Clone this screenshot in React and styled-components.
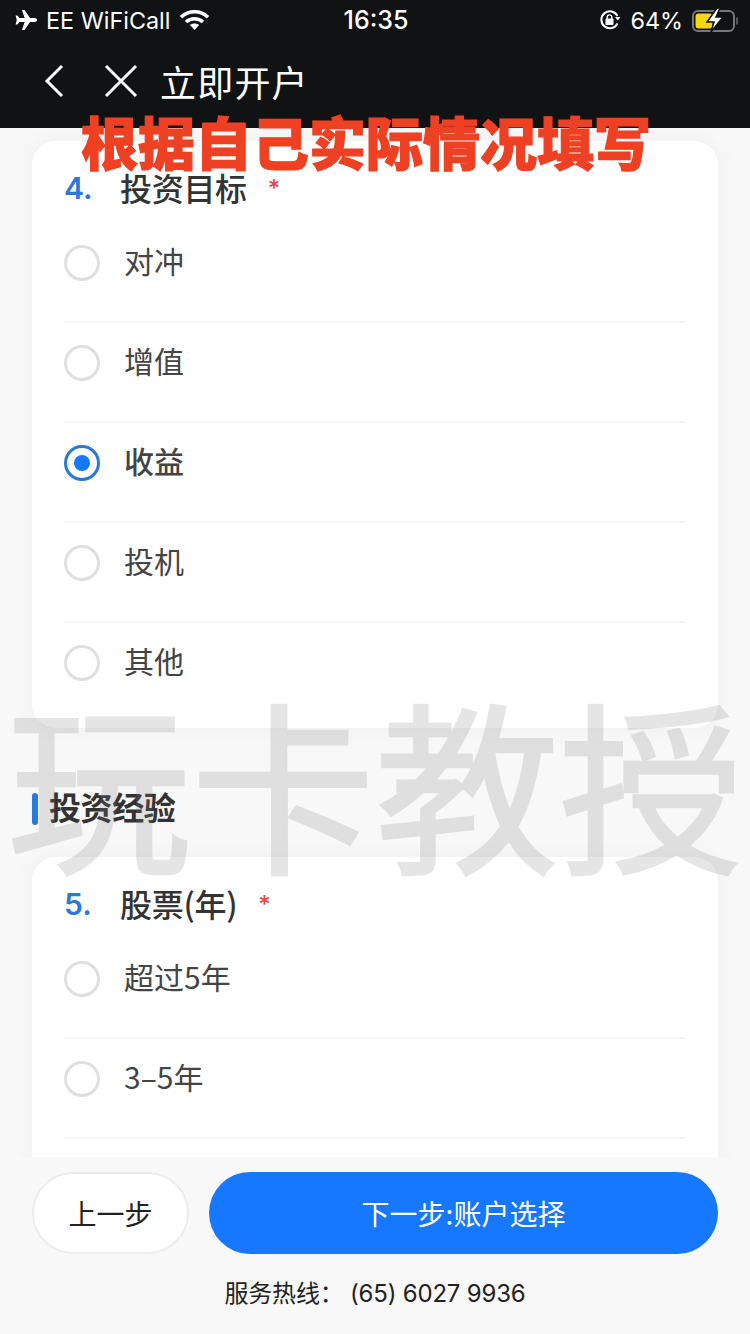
import React from 'react';
import styled, { createGlobalStyle } from 'styled-components';

const CJK = '"Noto Sans CJK SC", "Noto Sans", sans-serif';
const LATIN = 'Inter, "Noto Sans CJK SC", sans-serif';

const GlobalStyle = createGlobalStyle`
  html, body {
    margin: 0;
    padding: 0;
    background: #f8f8f8;
  }
  * {
    box-sizing: border-box;
  }
`;

const Page = styled.div`
  position: relative;
  display: flex;
  flex-direction: column;
  width: 750px;
  height: 1334px;
  overflow: hidden;
  background: #f8f8f8;
  font-family: ${CJK};
`;

const Header = styled.header`
  flex: 0 0 128px;
  display: flex;
  flex-direction: column;
  background: #111214;
  color: #fff;
`;

const StatusBar = styled.div`
  display: grid;
  grid-template-columns: 1fr auto 1fr;
  align-items: center;
  height: 40px;
  padding: 0 12px 0 14px;
  font-family: ${LATIN};
  font-size: 23.4px;
`;

const StatusGroup = styled.div`
  display: flex;
  align-items: center;
  gap: ${(p) => p.$gap}px;
  justify-content: ${(p) => (p.$end ? 'flex-end' : 'flex-start')};
`;

const Clock = styled.span`
  font-size: 25px;
  font-weight: 500;
`;

const NavBar = styled.div`
  display: flex;
  align-items: center;
  height: 88px;
  padding: 0 0 6px 44px;
`;

const NavButton = styled.span`
  display: flex;
  margin-right: ${(p) => p.$gap}px;
`;

const NavTitle = styled.h1`
  margin: 0;
  font-size: 36px;
  font-weight: 400;
  line-height: 1;
  letter-spacing: 1.2px;
`;

const Content = styled.main`
  flex: 1;
  min-height: 0;
  overflow: hidden;
  padding: 13px 32px 0;
`;

const Card = styled.section`
  border-radius: 24px;
  background: #fff;
  box-shadow: 0 0 20px 4px rgba(0, 0, 0, 0.03);
  padding: 29px 32px ${(p) => p.$bottom}px;
`;

const Question = styled.div`
  display: flex;
  align-items: center;
  height: 36px;
`;

const QuestionNo = styled.span`
  width: 56px;
  font-family: ${LATIN};
  font-size: 30px;
  font-weight: 600;
  color: #2a78dc;
`;

const QuestionText = styled.span`
  margin-top: -2px;
  font-size: 32px;
  font-weight: 500;
  line-height: 36px;
  letter-spacing: -0.3px;
  color: #333;
`;

const Required = styled.span`
  margin-left: 21px;
  font-family: ${LATIN};
  font-size: 24px;
  font-weight: 500;
  color: #e8484a;
`;

const OptionList = styled.div`
  margin-top: 17px;
`;

const Option = styled.div`
  display: flex;
  align-items: flex-start;
  gap: 24px;
  height: 100px;
  padding-top: 22px;
  border-bottom: ${(p) => (p.$last ? 'none' : '2px solid #f5f5f5')};
`;

const Radio = styled.span`
  flex: none;
  display: flex;
  align-items: center;
  justify-content: center;
  width: 36px;
  height: 36px;
  border-radius: 50%;
  border: 3px solid ${(p) => (p.$on ? '#2a78dc' : '#dfdfdf')};

  &::after {
    content: '';
    display: ${(p) => (p.$on ? 'block' : 'none')};
    width: 16px;
    height: 16px;
    border-radius: 50%;
    background: #1677ff;
  }
`;

const OptionLabel = styled.span`
  margin-top: -3px;
  font-size: 30px;
  font-weight: ${(p) => (p.$on ? 500 : 400)};
  line-height: 36px;
  color: #444;
`;

const SectionTitle = styled.h2`
  display: flex;
  align-items: center;
  gap: 11px;
  height: 129px;
  margin: 0;
  padding-top: 32px;
  font-size: 32px;
  font-weight: 700;
  letter-spacing: -0.4px;
  color: #333;

  &::before {
    content: '';
    width: 6px;
    height: 32px;
    border-radius: 3px;
    background: #2a78dc;
  }
`;

const SectionLabel = styled.span`
  margin-top: -5px;
  line-height: 36px;
`;

const Footer = styled.footer`
  flex: 0 0 177px;
  padding: 15px 32px 0;
  background: #f8f8f8;
`;

const ButtonRow = styled.div`
  display: flex;
  gap: 20px;
`;

const BackButton = styled.button`
  width: 157px;
  height: 82px;
  border: 2px solid #ececec;
  border-radius: 41px;
  background: #fff;
  color: #222;
  font-family: ${CJK};
  font-size: 28px;
`;

const NextButton = styled.button`
  flex: 1;
  height: 82px;
  border: none;
  border-radius: 41px;
  background: #1677ff;
  color: #fff;
  font-family: ${CJK};
  font-size: 28px;
`;

const Hotline = styled.div`
  margin-top: 23px;
  text-align: center;
  font-family: ${LATIN};
  font-size: 24px;
  line-height: 34px;
  letter-spacing: -0.2px;
  color: #222;
`;

const Banner = styled.div`
  position: absolute;
  top: 97px;
  left: 81px;
  font-size: 57px;
  font-weight: 900;
  line-height: 86px;
  white-space: nowrap;
  color: #ee4023;
  -webkit-text-stroke: 1.2px #ee4023;
`;

const Watermark = styled.div`
  position: absolute;
  top: 650px;
  left: 0;
  width: 750px;
  text-align: center;
  font-size: 184px;
  font-weight: 400;
  line-height: 260px;
  white-space: nowrap;
  color: #808080;
  -webkit-text-stroke: 2.5px #808080;
  opacity: 0.2;
  pointer-events: none;
`;

const Plane = () => (
  <svg width="23" height="22" viewBox="0 0 23 22" fill="#fff">
    <path d="M8 1h2.600l5.400 8h4.800c1.200 0 2.200.9 2.200 2s-1 2-2.200 2H16l-5.400 8H8l2.600-8H5.400l-2 2.600H1.600L2.800 11 1.600 6.400h1.800l2 2.600h5.200z" />
  </svg>
);

const Wifi = () => (
  <svg width="31" height="22" viewBox="0 0 31 22" fill="none" stroke="#fff" strokeWidth="3.6">
    <path d="M2 8.200C9.600 1 21.400 1 29 8.200" />
    <path d="M7 13c4.800-4.300 12.200-4.300 17 0" />
    <path d="M15.500 21l-4.600-5c2.600-2 6.600-2 9.200 0z" fill="#fff" stroke="none" />
  </svg>
);

const RotationLock = () => (
  <svg width="22" height="22" viewBox="0 0 22 22" fill="none">
    <path d="M18.500 14.500A8.500 8.500 0 1 1 18.500 7" stroke="#fff" strokeWidth="2" />
    <path d="M16 8h5.500l-2.700 3.500z" fill="#fff" />
    <rect x="6.500" y="9.500" width="8" height="6.500" rx="1" fill="#fff" />
    <path d="M8.200 10V8.200a2.300 2.300 0 0 1 4.600 0V10" stroke="#fff" strokeWidth="1.400" />
  </svg>
);

const Battery = () => (
  <svg width="46" height="26" viewBox="0 0 46 26" fill="none">
    <rect x="1" y="4" width="41" height="20" rx="5" stroke="#77787a" strokeWidth="2" />
    <rect x="3.500" y="6.500" width="17" height="15" rx="3" fill="#f5d60f" />
    <path d="M45 10.500v7" stroke="#55565a" strokeWidth="2" />
    <path d="M25 1L15 15h7l-3 10 12-15h-7l4-9z" fill="#fff" stroke="#111214" strokeWidth="1.500" />
  </svg>
);

const BackIcon = () => (
  <svg width="20" height="34" viewBox="0 0 20 34" fill="none" stroke="#fff" strokeWidth="3">
    <path d="M18 2L3 17l15 15" />
  </svg>
);

const CloseIcon = () => (
  <svg width="34" height="34" viewBox="0 0 34 34" fill="none" stroke="#fff" strokeWidth="3">
    <path d="M2 2l30 30M32 2L2 32" />
  </svg>
);

const goalOptions = [
  { label: '对冲' },
  { label: '增值' },
  { label: '收益', on: true },
  { label: '投机' },
  { label: '其他', last: true }
];

const stockOptions = [{ label: '超过5年' }, { label: '3–5年' }];

function Options({ items }) {
  return (
    <OptionList>
      {items.map((o) => (
        <Option key={o.label} $last={o.last}>
          <Radio $on={o.on} />
          <OptionLabel $on={o.on}>{o.label}</OptionLabel>
        </Option>
      ))}
    </OptionList>
  );
}

export default function App() {
  return (
    <Page>
      <GlobalStyle />
      <Header>
        <StatusBar>
          <StatusGroup $gap={9}>
            <Plane />
            <span>EE WiFiCall</span>
            <Wifi />
          </StatusGroup>
          <Clock>16:35</Clock>
          <StatusGroup $end $gap={9}>
            <RotationLock />
            <span>64%</span>
            <Battery />
          </StatusGroup>
        </StatusBar>
        <NavBar>
          <NavButton $gap={40}><BackIcon /></NavButton>
          <NavButton $gap={22}><CloseIcon /></NavButton>
          <NavTitle>立即开户</NavTitle>
        </NavBar>
      </Header>
      <Content>
        <Card $bottom={5}>
          <Question>
            <QuestionNo>4.</QuestionNo>
            <QuestionText>投资目标</QuestionText>
            <Required>*</Required>
          </Question>
          <Options items={goalOptions} />
        </Card>
        <SectionTitle><SectionLabel>投资经验</SectionLabel></SectionTitle>
        <Card $bottom={60}>
          <Question>
            <QuestionNo>5.</QuestionNo>
            <QuestionText>股票(年)</QuestionText>
            <Required>*</Required>
          </Question>
          <Options items={stockOptions} />
        </Card>
      </Content>
      <Footer>
        <ButtonRow>
          <BackButton>上一步</BackButton>
          <NextButton>下一步:账户选择</NextButton>
        </ButtonRow>
        <Hotline>服务热线： (65) 6027 9936</Hotline>
      </Footer>
      <Banner>根据自己实际情况填写</Banner>
      <Watermark>玩卡教授</Watermark>
    </Page>
  );
}
